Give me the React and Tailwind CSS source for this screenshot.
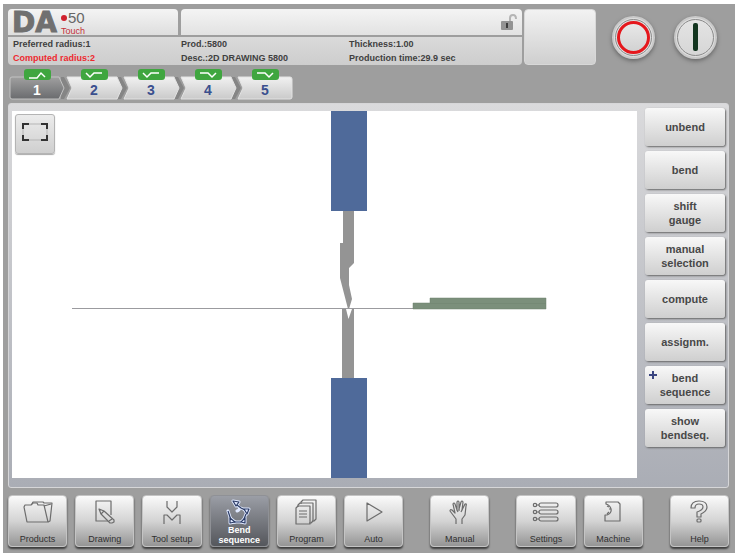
import React, { useState } from "react";
import clsx from "clsx";

const UP = "M1 8 H9 L13 3 L17 7";
const CHECK = "M1 3 L5 7 L9 3 H17";
const DOWN = "M1 3 H9 L13 7 L17 3";

const BENDS = [
  { id: 1, path: UP },
  { id: 2, path: CHECK },
  { id: 3, path: CHECK },
  { id: 4, path: DOWN },
  { id: 5, path: DOWN },
];

const INFO = [
  { label: "Preferred radius", value: "1" },
  { label: "Prod.", value: "5800" },
  { label: "Thickness", value: "1.00" },
  { label: "Computed radius", value: "2", alert: true },
  { label: "Desc.", value: "2D DRAWING 5800" },
  { label: "Production time", value: "29.9 sec" },
];

const ACTIONS = [
  { label: "unbend" },
  { label: "bend" },
  { label: "shift gauge" },
  { label: "manual selection" },
  { label: "compute" },
  { label: "assignm." },
  { label: "bend sequence", plus: true },
  { label: "show bendseq." },
];

const ICONS = {
  products: (
    <>
      <path d="M4 23 L1 8 L2 6 H8 L10 4 H14 L15 6 H21 L25 23 Z" />
      <path d="M9 5 L10 3 H20 L21 4 H29 L27 22 L25 23" />
      <path d="M21 7 L28 5" />
    </>
  ),
  drawing: (
    <>
      <path d="M21 16 V2 H6 V22 H18" />
      <path d="M9 10 L14 12 L24 21 L24 23 L22 24 L20 24 L11 15 Z" />
      <path d="M14 12 L11 15 M22 20 L19 22" />
    </>
  ),
  tool: (
    <>
      <path d="M10 2 V8 L15 13 L20 8 V2" />
      <path d="M7 25 V16 H10 L15 21 L20 16 H23 V25" />
    </>
  ),
  bend: (
    <>
      <g fill="#dfe8ff" stroke="#dfe8ff" strokeWidth="3" strokeLinecap="round">
        <path fill="none" d="M4 12 L7 21 M10 23 H17 M20 20 L22 15 M21 11 L17 9 M13 6 Q18 10 13 12" />
        <path d="M9 2 L15 3 L12 7 Z M20 10 L25 10 L23 15 Z M6 19 L11 23 L6 24 Z M17 23 L21 19 L21 24 Z" />
      </g>
      <g stroke="#2c3c66">
        <path d="M4 12 L7 21 M10 23 H17 M20 20 L22 15 M21 11 L17 9 L13 6" />
        <path d="M9 2 L15 3 L12 7 Z M20 10 L25 10 L23 15 Z M6 19 L11 23 L6 24 Z M17 23 L21 19 L21 24 Z" />
      </g>
    </>
  ),
  program: (
    <>
      <path d="M10 5 V3 L12 1 H25 V20 L23 22 H21" />
      <path d="M7 8 V6 L9 4 H22 V22 L20 24 H18" />
      <path d="M7 7 H19 V25 H5 V9 Z" />
      <path d="M8 12 H16 M8 15 H16 M8 18 H16" />
    </>
  ),
  auto: <path d="M8 4 V22 L23 13 Z" />,
  manual: (
    <>
      <path d="M11 25 V20 L5 12 Q5 10 7 11 L10 14 L8 5 Q9 3 10 5 L12 11 L12 3 Q13 1 14 3 L14 10 L16 3 Q17 1 18 3 L17 11 L20 5 Q22 4 21 7 L20 16 L17 20 V25" />
      <path d="M12 11 L13 13 M14 10 V12 M17 11 L16 13" />
    </>
  ),
  settings: (
    <>
      {[6, 13, 20].map((y) => (
        <g key={y}>
          <circle cx="4" cy={y} r="1.7" />
          <path d={`M6 ${y} H8`} />
          <rect x="8" y={y - 2} width="19" height="4" rx="2" />
        </g>
      ))}
    </>
  ),
  machine: (
    <>
      <path d="M8 5 V3 H20 L22 5 V22 H7 V16 L9 16 Q14 14 13 10 Q12 6 8 5 Z" />
      <path d="M9 7 L11 8 M11 10 H13 M9 15 L11 13" />
    </>
  ),
  help: (
    <>
      <path d="M7 9 Q7 2 15 2 Q23 2 23 8 Q23 12 17 15 V18 H13 V13 Q19 11 19 8 Q19 5 15 5 Q11 5 11 9 Z" />
      <rect x="13" y="20" width="4" height="3" rx="1" />
    </>
  ),
};

const NAV = [
  { label: "Products", icon: "products" },
  { label: "Drawing", icon: "drawing" },
  { label: "Tool setup", icon: "tool" },
  { label: "Bend sequence", icon: "bend" },
  { label: "Program", icon: "program" },
  { label: "Auto", icon: "auto" },
  { label: "Manual", icon: "manual", gap: true },
  { label: "Settings", icon: "settings", gap: true },
  { label: "Machine", icon: "machine" },
  { label: "Help", icon: "help", gap: true },
];

function Logo() {
  return (
    <div className="flex items-center gap-1 pt-[2px] pl-1">
      <span className="font-['DejaVu_Sans'] text-[28px] leading-[26px] font-bold text-[#707070] [-webkit-text-stroke:1px_#707070]">
        DA
      </span>
      <span className="flex flex-col">
        <span className="flex items-center gap-px text-[15px] leading-4 text-[#666]">
          <i className="size-[6px] rounded-full bg-[#d0202c]" />
          50
        </span>
        <span className="font-['Liberation_Sans_Narrow','Liberation_Sans'] text-[9px] leading-[10px] text-[#c4303a]">
          Touch
        </span>
      </span>
    </div>
  );
}

function Header() {
  return (
    <header className="flex gap-[2px]">
      <div className="flex flex-1 flex-col gap-[2px]">
        <div className="flex h-[26px] gap-[3px]">
          <div className="flex w-[33%] items-center rounded-t-[4px] bg-linear-to-b from-[#f4f4f4] to-[#dedede]">
            <Logo />
          </div>
          <div className="flex flex-1 items-center justify-end rounded-t-[4px] bg-linear-to-b from-[#f4f4f4] to-[#e2e2e2] pr-1">
            <svg viewBox="0 0 18 18" className="size-[18px]" role="img" aria-label="Unlocked">
              <path d="M10 9 V5 Q10 2 13 2 Q16 2 16 6" fill="none" stroke="#b5b5b5" strokeWidth="2" />
              <rect x="1" y="8" width="12" height="9" rx="1" fill="#939393" />
              <rect x="6" y="10" width="2" height="5" fill="#3c3c3c" />
            </svg>
          </div>
        </div>
        <dl className="grid grid-cols-3 rounded-b-[4px] bg-linear-to-b from-[#dadada] to-[#cdcdcd] px-[5px] text-[9px] leading-[14px] font-bold text-[#3f3f3f]">
          {INFO.map((item) => (
            <div key={item.label} className={clsx("flex whitespace-nowrap", item.alert && "text-[#ee2a30]")}>
              <dt>{item.label}:</dt>
              <dd>{item.value}</dd>
            </div>
          ))}
        </dl>
      </div>
      <div className="w-[72px] rounded-[4px] border border-[#d8d8d8] bg-linear-to-b from-[#f2f2f2] to-[#cfcfcf]" />
      <div className="flex w-[131px] items-center justify-between pr-3 pl-[14px]">
        <button
          aria-label="Stop"
          className="flex size-[43px] items-center justify-center rounded-full border-2 border-[#c9c9c9] bg-[#dedede] shadow-[0_2px_4px_#666]"
        >
          <span className="flex size-[37px] items-center justify-center rounded-full border border-[#8a8a8a]">
            <span className="size-[33px] rounded-full border-[3px] border-[#e5171c] bg-linear-to-b from-[#e8e8e8] to-[#d2d2d2]" />
          </span>
        </button>
        <button
          aria-label="Start"
          className="flex size-[43px] items-center justify-center rounded-full border-2 border-[#c9c9c9] bg-[#dedede] shadow-[0_2px_4px_#666]"
        >
          <span className="flex size-[37px] items-center justify-center rounded-full border border-[#8a8a8a] bg-linear-to-b from-[#e4e4e4] to-[#d6d6d6]">
            <span className="h-7 w-[5px] rounded-[2px] bg-[#12351f]" />
          </span>
        </button>
      </div>
    </header>
  );
}

function BendTab({ bend, active, last, onSelect }) {
  const shape = last
    ? "M1 1 H53 Q55 1 55 3 V21 Q55 23 53 23 H1 L6 12 Z"
    : bend.id === 1
      ? "M3 1 H50 L55 12 L50 23 H3 Q1 23 1 21 V3 Q1 1 3 1 Z"
      : "M1 1 H51 L56 12 L51 23 H1 L6 12 Z";

  return (
    <button
      onClick={() => onSelect(bend.id)}
      aria-pressed={active}
      className="relative flex h-[31px] w-14 flex-col items-center justify-end pb-px"
    >
      <svg viewBox="0 0 56 24" className="absolute inset-x-0 bottom-0 h-6 overflow-visible" aria-hidden="true">
        <defs>
          <linearGradient id={`tab-${bend.id}`} x1="0" y1="0" x2="0" y2="1">
            <stop offset="0" stopColor={active ? "#a0a0a0" : "#f1f1f1"} />
            <stop offset="1" stopColor={active ? "#6a6b6e" : "#cacaca"} />
          </linearGradient>
        </defs>
        {!last && <path d="M52 1 H55 L61 12 L55 23 H52 Z" fill="#858585" />}
        <path d={shape} fill={`url(#tab-${bend.id})`} stroke={active ? "#c2c2c2" : "#e2e2e2"} />
      </svg>
      <span className="absolute top-0 flex h-[11px] w-[27px] items-center justify-center rounded-[3px] bg-[#3fa63f]">
        <svg viewBox="0 0 18 10" className="h-[10px] w-[18px]" fill="none" stroke="#ffffff" strokeWidth="1.5">
          <path d={bend.path} />
        </svg>
      </span>
      <span className={clsx("relative text-sm leading-[18px] font-bold", active ? "text-white" : "text-[#3a4f8e]")}>
        {bend.id}
      </span>
    </button>
  );
}

function Workpiece() {
  return (
    <svg viewBox="0 0 625 367" className="block h-auto w-full" role="img" aria-label="Bend simulation">
      <rect x="319" y="0" width="36" height="100" fill="#4f6a9a" />
      <rect x="319" y="267" width="36" height="100" fill="#4f6a9a" />
      <path d="M331 100 H342 V152 L337 157 V174 L340 188 L337 198 L336 198 L328 167 V132 H331 Z" fill="#949494" />
      <path d="M330 198 H334 L336.500 208 L340 198 H342 V267 H330 Z" fill="#949494" />
      <path d="M60 197.500 H402" stroke="#9b9b9f" />
      <path d="M401 198 V192 H418 V187 H534 V198 Z" fill="#7b8f7b" stroke="#6d836d" strokeWidth="0.500" />
      <path d="M418 192.500 H534" stroke="#6f836f" strokeOpacity="0.5" />
    </svg>
  );
}

export default function App() {
  const [bend, setBend] = useState(1);
  const [page, setPage] = useState("Bend sequence");

  return (
    <div className="min-h-screen bg-white px-[3px] py-1 font-['Liberation_Sans',Arial,sans-serif]">
      <div className="bg-[#9e9e9e] pt-[5px] pr-[6px] pb-[6px] pl-[5px]">
        <Header />

        <div className="mt-[4px] mb-[3px] flex gap-px pl-px">
          {BENDS.map((item, i) => (
            <BendTab
              key={item.id}
              bend={item}
              active={item.id === bend}
              last={i === BENDS.length - 1}
              onSelect={setBend}
            />
          ))}
        </div>

        <main className="flex gap-2 rounded-[3px] border border-[#d6d6d8] bg-linear-to-b from-[#dadadc] to-[#aaadb5] px-[3px] pt-1 pb-[9px]">
          <div className="relative mt-[3px] flex-1 self-start bg-white">
            <Workpiece />
            <button
              aria-label="Zoom to fit"
              className="absolute top-[3px] left-[3px] flex size-10 items-center justify-center rounded-[3px] border border-[#b4b4b4] bg-linear-to-b from-[#ececec] to-[#cfcfcf] pb-1 shadow-[0_1px_1px_#aaa]"
            >
              <svg viewBox="0 0 26 18" className="h-[18px] w-[26px]" fill="none">
                <rect x="1" y="1" width="24" height="16" stroke="#b5b5b5" />
                <path d="M1 6 V1 H7 M19 1 H25 V6 M25 12 V17 H19 M7 17 H1 V12" stroke="#333333" strokeWidth="2" />
              </svg>
            </button>
          </div>

          <div className="flex w-20 flex-col gap-[5px]">
            {ACTIONS.map((action) => (
              <button
                key={action.label}
                className="relative flex h-[38px] items-center justify-center rounded-[3px] bg-linear-to-b from-[#f8f8f8] to-[#cfcfcf] px-3 text-[11px] leading-[14px] font-bold text-[#484848] shadow-[1px_1px_2px_#666]"
              >
                {action.plus && (
                  <svg viewBox="0 0 8 8" className="absolute top-[5px] left-1 size-2" aria-hidden="true">
                    <path d="M4 0 V8 M0 4 H8" stroke="#3a4580" strokeWidth="2" />
                  </svg>
                )}
                {action.label}
              </button>
            ))}
          </div>
        </main>

        <nav className="mt-[7px] flex gap-2">
          {NAV.map((item) => {
            const active = item.label === page;
            return (
              <button
                key={item.label}
                onClick={() => setPage(item.label)}
                className={clsx(
                  "flex h-[52px] flex-1 flex-col items-center justify-between rounded-[4px] border pt-[3px] pb-px text-[9px] leading-[10px] shadow-[0_2px_2px_#3c3c3c]",
                  item.gap && "ml-[19px]",
                  active
                    ? "border-[#8f9196] bg-linear-to-b from-[#9b9ea6] to-[#55575c] font-bold text-white"
                    : "border-[#c4c4c4] bg-linear-to-b from-[#fafafa] via-[#d4d4d4] to-[#959595] text-[#303030]"
                )}
              >
                <svg
                  viewBox="0 0 30 27"
                  className="h-[27px] w-[30px] shrink-0"
                  fill="none"
                  stroke="#6c6c6c"
                  strokeWidth="1.2"
                  strokeLinejoin="round"
                  aria-hidden="true"
                >
                  {ICONS[item.icon]}
                </svg>
                <span className={clsx(active ? "-mt-1" : "pb-px")}>{item.label}</span>
              </button>
            );
          })}
        </nav>
      </div>
    </div>
  );
}
